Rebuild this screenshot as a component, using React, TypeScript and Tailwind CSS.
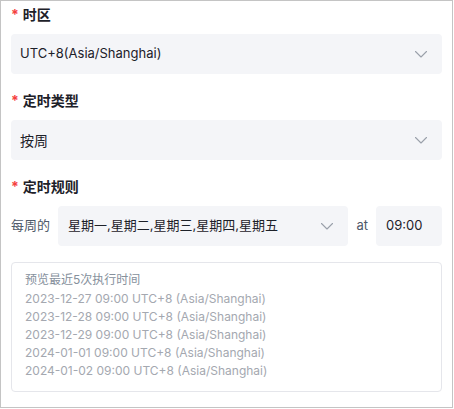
import React from 'react';

const Chevron: React.FC = () => (
  <svg viewBox="0 0 12 7" className="h-[7px] w-[12px] shrink-0 text-[#9aa0aa]" fill="none">
    <path d="M0.5 0.5L6 6L11.5 0.5" stroke="currentColor" strokeWidth="1.1" strokeLinecap="round" strokeLinejoin="round" />
  </svg>
);

const Label: React.FC<{ text: string }> = ({ text }) => (
  <div className="mb-[10px] flex h-[20px] items-center text-[14px] font-bold text-[#1d2129]">
    <span className="mr-[4px] text-[#f53f3f]">*</span>
    {text}
  </div>
);

const Select: React.FC<{ value: string; size?: string }> = ({ value, size = 'text-[14px]' }) => (
  <div className={`flex h-[40px] items-center justify-between rounded-[4px] bg-[#f4f5f8] pl-[9px] pr-[15px] text-[#1d2129] ${size}`}>
    <span>{value}</span>
    <Chevron />
  </div>
);

const runs = [
  '2023-12-27 09:00 UTC+8 (Asia/Shanghai)',
  '2023-12-28 09:00 UTC+8 (Asia/Shanghai)',
  '2023-12-29 09:00 UTC+8 (Asia/Shanghai)',
  '2024-01-01 09:00 UTC+8 (Asia/Shanghai)',
  '2024-01-02 09:00 UTC+8 (Asia/Shanghai)',
];

const App: React.FC = () => {
  return (
    <div
      className="h-[408px] w-[453px] border border-[#c4c4c4] bg-white px-[10px] pt-[3px]"
      style={{ fontFamily: 'Inter, "Noto Sans CJK SC", sans-serif' }}
    >
      <div className="mb-[16px]">
        <Label text="时区" />
        <Select value="UTC+8(Asia/Shanghai)" size="text-[13px]" />
      </div>

      <div className="mb-[16px]">
        <Label text="定时类型" />
        <Select value="按周" />
      </div>

      <div className="mb-[16px]">
        <Label text="定时规则" />
        <div className="flex items-center gap-2">
          <span className="text-[13px] text-[#4e5969]">每周的</span>
          <div className="flex h-[40px] flex-1 items-center justify-between rounded-[4px] bg-[#f4f5f8] pl-[10px] pr-[15px] text-[13px] text-[#1d2129]">
            <span>星期一,星期二,星期三,星期四,星期五</span>
            <Chevron />
          </div>
          <span className="text-[13px] text-[#4e5969]">at</span>
          <div className="flex h-[40px] w-[66px] items-center rounded-[4px] bg-[#f4f5f8] pl-[10px] text-[13px] text-[#1d2129]">
            09:00
          </div>
        </div>
      </div>

      <div className="h-[130px] rounded-[4px] border border-[#e5e6eb] px-[13px] py-[7px]">
        <div className="text-[12px] leading-[20px] text-[#86909c]">预览最近5次执行时间</div>
        {runs.map(r => (
          <div key={r} className="text-[12px] leading-[18px] text-[#a4a8b0]">
            {r}
          </div>
        ))}
      </div>
    </div>
  );
};

export default App;
